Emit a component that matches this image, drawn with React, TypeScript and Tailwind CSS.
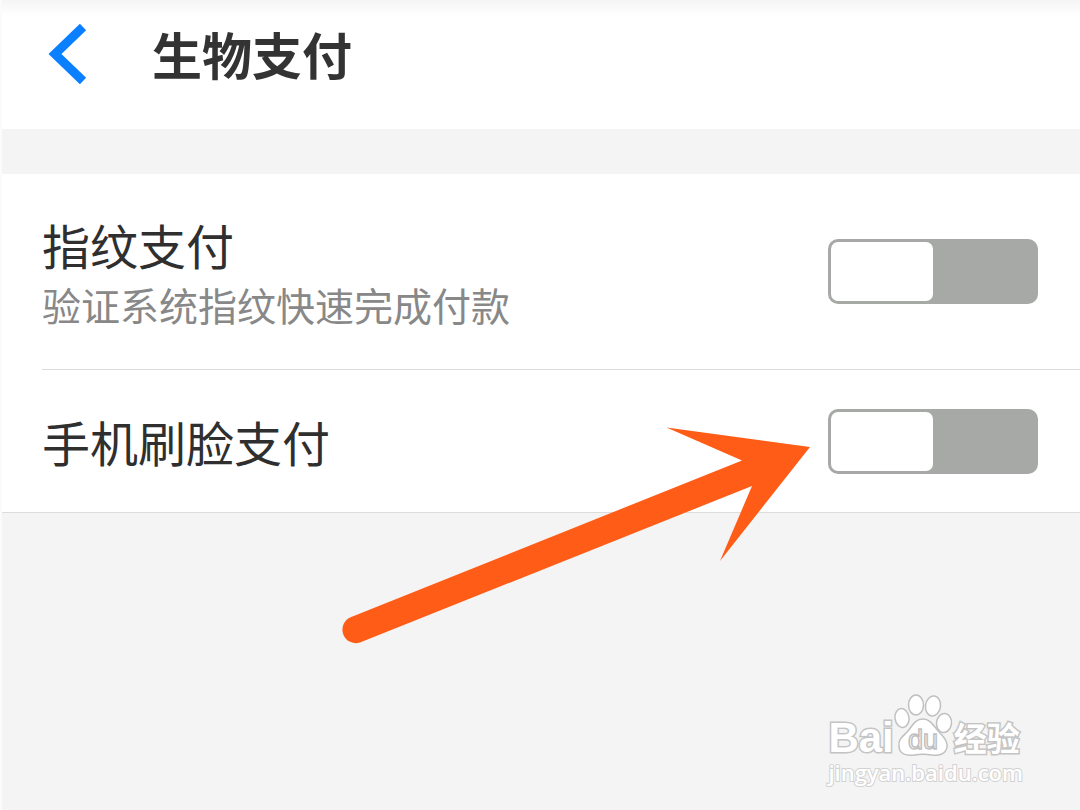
import React, { useState } from 'react';

interface PaymentOption {
  id: string;
  title: string;
  description?: string;
}

const options: PaymentOption[] = [
  { id: 'fingerprint', title: '指纹支付', description: '验证系统指纹快速完成付款' },
  { id: 'face', title: '手机刷脸支付' },
];

const OptionRow: React.FC<{ option: PaymentOption }> = ({ option }) => {
  const [enabled, setEnabled] = useState(false);

  return (
    <li className="pl-10 group">
      <div
        className={`flex items-center justify-between pr-[42px] border-b border-[#dcdcdc] group-last:border-b-0 ${
          option.description ? 'h-[196px]' : 'h-[142px]'
        }`}
      >
        <label htmlFor={option.id} className="flex flex-col">
          <span className="text-5xl leading-[64px] text-[#2f2f2f]">{option.title}</span>
          {option.description && (
            <span className="text-[39px] leading-[56px] text-[#888888]">{option.description}</span>
          )}
        </label>
        <input
          id={option.id}
          type="checkbox"
          role="switch"
          checked={enabled}
          onChange={e => setEnabled(e.target.checked)}
          className="appearance-none shrink-0 w-[210px] h-[65px] rounded-[10px] border-3 border-[#a7a9a6] bg-[#a7a9a6] checked:border-[#0a80ff] checked:bg-[#0a80ff] before:block before:w-[102px] before:h-full before:rounded-[7px] before:bg-white checked:before:ml-auto"
        />
      </div>
    </li>
  );
};

const PointerArrow: React.FC = () => (
  <svg
    className="absolute left-[338px] top-[425px] pointer-events-none"
    width="472"
    height="220"
    viewBox="0 0 472 220"
    fill="#ff5d17"
    aria-hidden="true"
  >
    <path d="M470 22 L326.500 2.500 L402 35.500 L10 192.500 A13.500 13.500 0 0 0 20 217.500 L412 61 L380 136 Z" />
  </svg>
);

const Watermark: React.FC = () => (
  <footer className="mt-auto self-end mr-[57px] pb-6 text-white">
    <div className="flex items-end h-[64px]">
      <span className="font-['Liberation_Sans',sans-serif] font-bold text-[42px] leading-[40px] [-webkit-text-stroke:3px_#c4c4c4] [paint-order:stroke_fill]">
        Bai
      </span>
      <svg width="60" height="64" viewBox="0 0 60 64" fill="#fff" stroke="#c0c0c0" strokeWidth="1.5" aria-label="du">
        <ellipse cx="8" cy="24" rx="7" ry="9.500" transform="rotate(-8 8 24)" />
        <ellipse cx="22" cy="11" rx="7.500" ry="10" />
        <ellipse cx="39" cy="12" rx="7.500" ry="10" transform="rotate(8 39 12)" />
        <ellipse cx="50" cy="29" rx="7.500" ry="9.500" transform="rotate(8 50 29)" />
        <path d="M29 25 C37 25 40 33 46 39 C51 44 54 48 53 53 C52 60 45 62 38 61 C32 60 26 60 20 61 C12 62 5 60 5 52 C4 46 8 43 13 38 C18 33 20 25 29 25 Z" />
        <text
          x="29"
          y="55"
          textAnchor="middle"
          fontFamily="Liberation Sans, sans-serif"
          fontSize="27"
          strokeWidth="1.5"
        >
          du
        </text>
      </svg>
      <span className="font-bold text-[33px] leading-[42px] [-webkit-text-stroke:3px_#c4c4c4] [paint-order:stroke_fill]">
        经验
      </span>
    </div>
    <a
      href="#"
      className="block font-['Open_Sans',sans-serif] font-semibold text-[22px] leading-[28px] [-webkit-text-stroke:2px_#d2d2d2] [paint-order:stroke_fill]"
    >
      jingyan.baidu.com
    </a>
  </footer>
);

const App: React.FC = () => (
  <main
    lang="zh-CN"
    className="relative flex flex-col min-h-screen bg-[#f4f4f4] border-l-2 border-[#fbfbfb] font-['Noto_Sans_CJK_SC',sans-serif]"
  >
    <header className="flex items-start gap-[64px] h-[129px] pt-6 pl-[46px] bg-white bg-linear-to-b from-[#f5f5f5] to-white to-[16px]">
      <button type="button" aria-label="返回">
        <svg width="40" height="60" viewBox="0 0 40 60" fill="none" stroke="#0a80ff" strokeWidth="9">
          <path d="M35 3 L7 30 L35 57" />
        </svg>
      </button>
      <h1 className="text-[50px] leading-[58px] font-bold text-[#333333]">生物支付</h1>
    </header>

    <ul className="mt-[45px] bg-white border-b border-[#dcdcdc]">
      {options.map(option => (
        <OptionRow key={option.id} option={option} />
      ))}
    </ul>

    <PointerArrow />
    <Watermark />
  </main>
);

export default App;
